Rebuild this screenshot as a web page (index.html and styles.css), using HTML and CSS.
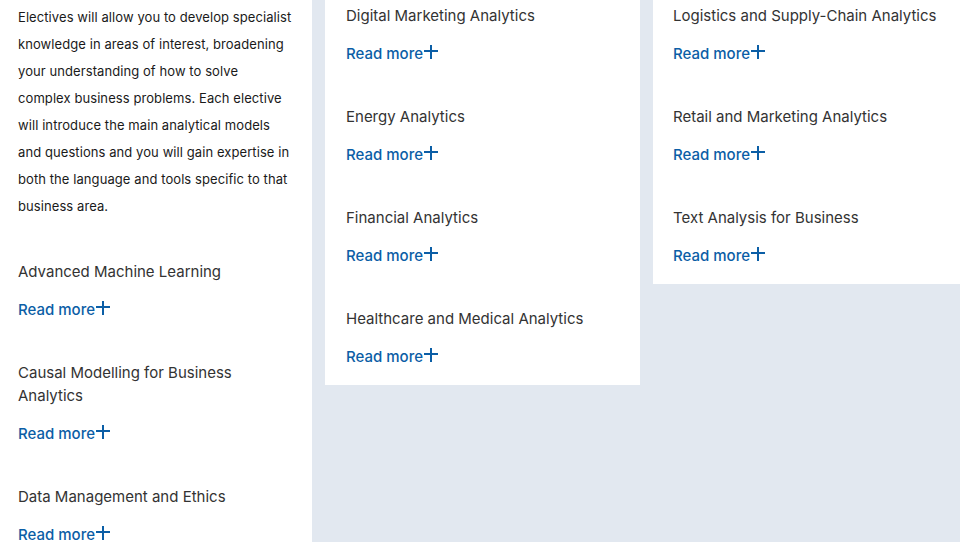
FILE: index.html
```html
<!DOCTYPE html>
<html lang="en">
<head>
<meta charset="utf-8">
<title>Electives</title>
<link rel="stylesheet" href="styles.css">
</head>
<body>
<div class="page">
  <section class="col col-main">
    <p class="intro">Electives will allow you to develop specialist knowledge in areas of interest, broadening your understanding of how to solve complex business problems. Each elective will introduce the main analytical models and questions and you will gain expertise in both the language and tools specific to that business area.</p>
    <div class="item"><h3 class="title">Advanced Machine Learning</h3><a class="more" href="#">Read more<svg class="plus" viewBox="0 0 14 14" width="14" height="14"><path d="M7 0v14M0 6h14" stroke="currentColor" stroke-width="2" fill="none"/></svg></a></div>
    <div class="item"><h3 class="title narrow">Causal Modelling for Business Analytics</h3><a class="more" href="#">Read more<svg class="plus" viewBox="0 0 14 14" width="14" height="14"><path d="M7 0v14M0 6h14" stroke="currentColor" stroke-width="2" fill="none"/></svg></a></div>
    <div class="item"><h3 class="title">Data Management and Ethics</h3><a class="more" href="#">Read more<svg class="plus" viewBox="0 0 14 14" width="14" height="14"><path d="M7 0v14M0 6h14" stroke="currentColor" stroke-width="2" fill="none"/></svg></a></div>
  </section>
  <section class="card card-mid">
    <div class="item"><h3 class="title">Digital Marketing Analytics</h3><a class="more" href="#">Read more<svg class="plus" viewBox="0 0 14 14" width="14" height="14"><path d="M7 0v14M0 6h14" stroke="currentColor" stroke-width="2" fill="none"/></svg></a></div>
    <div class="item"><h3 class="title">Energy Analytics</h3><a class="more" href="#">Read more<svg class="plus" viewBox="0 0 14 14" width="14" height="14"><path d="M7 0v14M0 6h14" stroke="currentColor" stroke-width="2" fill="none"/></svg></a></div>
    <div class="item"><h3 class="title">Financial Analytics</h3><a class="more" href="#">Read more<svg class="plus" viewBox="0 0 14 14" width="14" height="14"><path d="M7 0v14M0 6h14" stroke="currentColor" stroke-width="2" fill="none"/></svg></a></div>
    <div class="item"><h3 class="title">Healthcare and Medical Analytics</h3><a class="more" href="#">Read more<svg class="plus" viewBox="0 0 14 14" width="14" height="14"><path d="M7 0v14M0 6h14" stroke="currentColor" stroke-width="2" fill="none"/></svg></a></div>
  </section>
  <section class="card card-right">
    <div class="item"><h3 class="title">Logistics and Supply-Chain Analytics</h3><a class="more" href="#">Read more<svg class="plus" viewBox="0 0 14 14" width="14" height="14"><path d="M7 0v14M0 6h14" stroke="currentColor" stroke-width="2" fill="none"/></svg></a></div>
    <div class="item"><h3 class="title">Retail and Marketing Analytics</h3><a class="more" href="#">Read more<svg class="plus" viewBox="0 0 14 14" width="14" height="14"><path d="M7 0v14M0 6h14" stroke="currentColor" stroke-width="2" fill="none"/></svg></a></div>
    <div class="item"><h3 class="title">Text Analysis for Business</h3><a class="more" href="#">Read more<svg class="plus" viewBox="0 0 14 14" width="14" height="14"><path d="M7 0v14M0 6h14" stroke="currentColor" stroke-width="2" fill="none"/></svg></a></div>
  </section>
</div>
</body>
</html>
```
FILE: styles.css
```css
* { box-sizing: border-box; }
html, body { margin: 0; padding: 0; }
body {
  background: #e2e8f0;
  font-family: Inter, "Liberation Sans", Arial, sans-serif;
  color: #333;
  overflow: hidden;
}
.page {
  display: flex;
  align-items: flex-start;
  gap: 13px;
  height: 542px;
}
.col-main {
  width: 312px;
  flex: none;
  align-self: stretch;
  background: #fff;
  padding: 4px 18px 0 18px;
}
.intro {
  width: 274px;
  margin: 0 0 40px 0;
  font-size: 13px;
  line-height: 27px;
  letter-spacing: 0.08px;
  color: #1a1a1a;
}
.card {
  background: #fff;
  padding: 4px 20px 17px 21px;
}
.card-mid { width: 315px; flex: none; }
.card-right { flex: 1; padding-left: 20px; }
.item { margin-bottom: 40px; }
.card .item:last-child { margin-bottom: 0; }
.title {
  margin: 0 0 15px 0;
  font-size: 15px;
  line-height: 23px;
  font-weight: 400;
  color: #333;
}
.narrow { width: 240px; }
.more {
  display: inline-flex;
  align-items: flex-start;
  font-size: 15px;
  line-height: 23px;
  color: #0b5ea6;
  text-decoration: none;
  font-weight: 500;
}
.plus { margin-top: 3px; margin-left: 1px; }
```
